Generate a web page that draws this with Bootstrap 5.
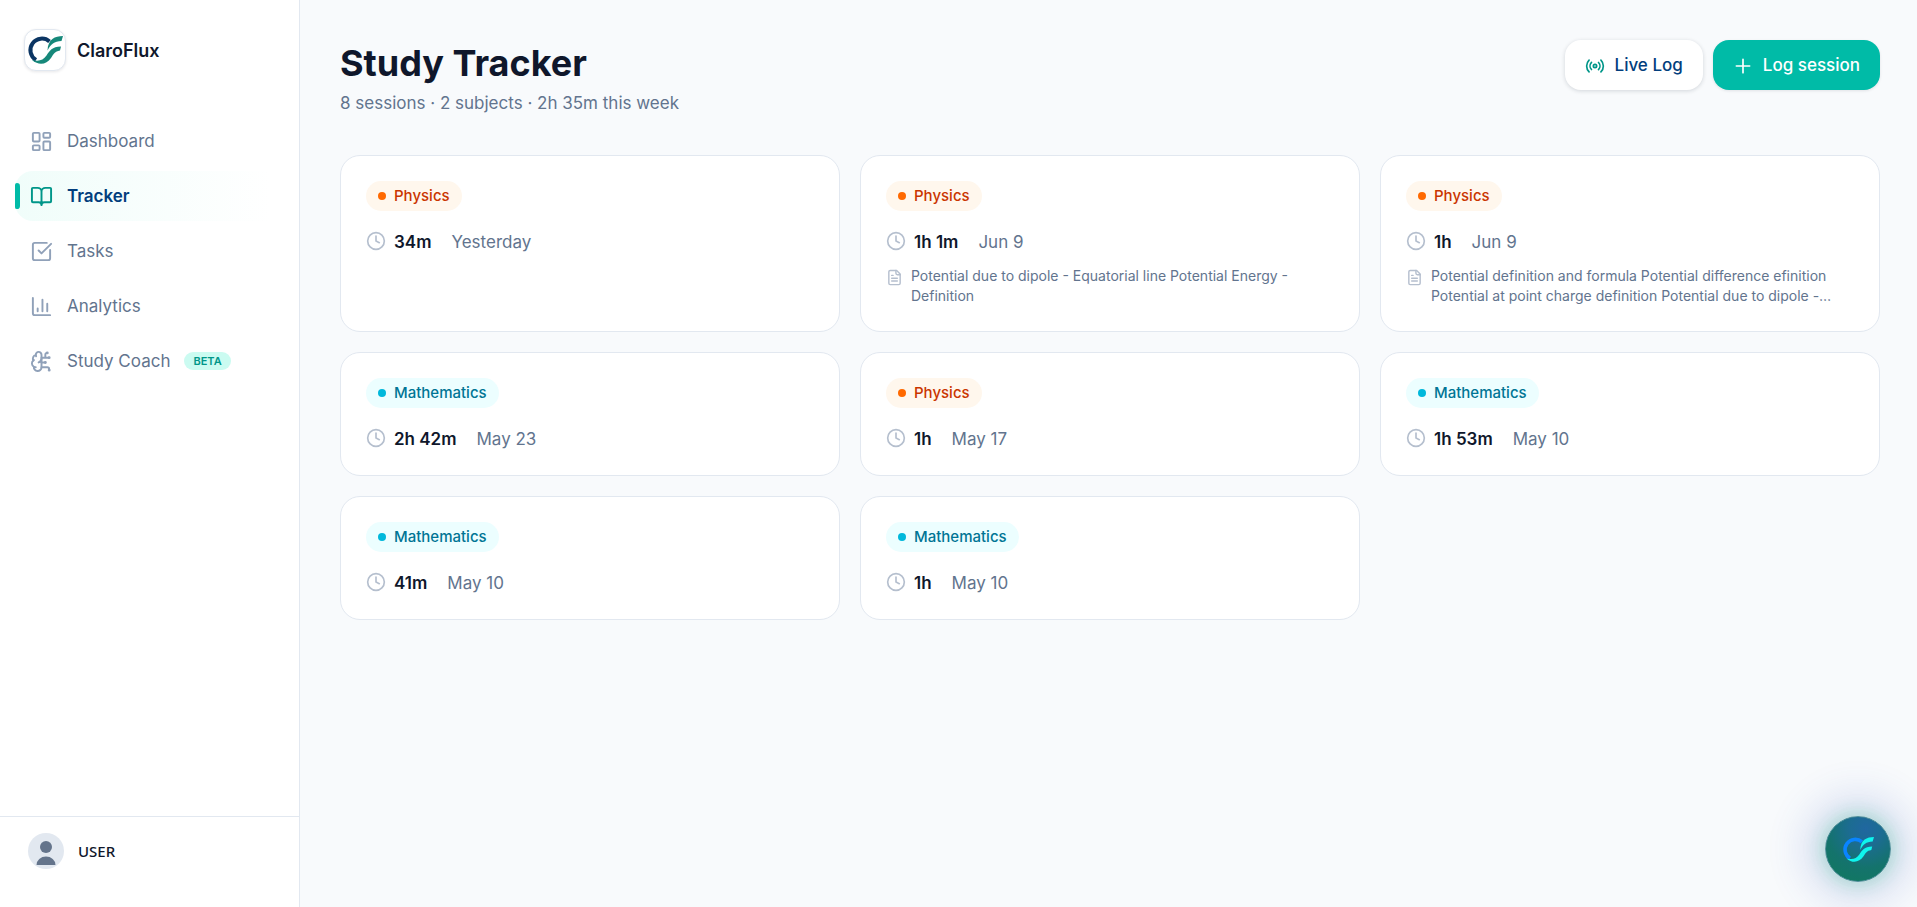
<!DOCTYPE html>
<html lang="en">
<head>
<meta charset="utf-8">
<meta name="viewport" content="width=device-width, initial-scale=1">
<title>ClaroFlux · Study Tracker</title>
<link href="https://cdn.jsdelivr.net/npm/bootstrap@5.3.0/dist/css/bootstrap.min.css" rel="stylesheet">
<style>
  body { font-family: Inter, "Liberation Sans", sans-serif; font-size: 17px; line-height: 25px; color: #0f172b; background: #f8fafc; }
  .icon { fill: none; stroke: currentColor; stroke-width: 2; stroke-linecap: round; stroke-linejoin: round; flex: none; }
  .text-slate { color: #62748e; }

  .side { width: 300px; border-right: 1px solid #e2e8f0; }
  .brand { padding: 29px 24px 0; gap: 11px; font-size: 18px; font-weight: 600; color: #0f172b; }
  .brand-mark { width: 42px; height: 42px; border: 1px solid #e2e8f0; border-radius: 12px; box-shadow: 0 1px 3px rgba(15,23,42,.1); }
  .side-nav { padding: 45px 15px 0; gap: 5px; }
  .side-link { display: flex; align-items: center; gap: 14px; height: 50px; padding: 0 15px; border-radius: 18px; color: #62748e; text-decoration: none; position: relative; }
  .side-link svg { color: #90a1b9; }
  .side-link.active { color: #023e7d; font-weight: 600; background: linear-gradient(90deg, #f0fdfa, #fff 95%); }
  .side-link.active svg { color: #009689; }
  .side-link.active::before { content: ""; position: absolute; left: 0; top: 12px; width: 5px; height: 26px; background: #00bba7; border-radius: 3px 5px 5px 3px; }
  .beta { font-size: 11px; line-height: 18px; font-weight: 600; padding: 0 9px; border-radius: 9px; background: #cbfbf1; color: #009689; }
  .account { height: 91px; border-top: 1px solid #e2e8f0; padding: 16px 28px 0; gap: 14px; }
  .account-name { font-family: "Noto Sans", sans-serif; font-size: 15px; font-weight: 500; line-height: 36px; }

  main { padding: 40px 37px 40px 40px; }
  h1 { font-size: 36px; line-height: 46px; font-weight: 700; margin: 0 0 5px; }
  .head { margin-bottom: 39px; }
  .actions { gap: 10px; }
  .act { height: 50px; border-radius: 16px; font-size: 17px; font-weight: 500; border: 0; padding: 2px 20px 0; display: flex; align-items: center; gap: 10px; }
  .act-live { background: #fff; color: #023e7d; box-shadow: 0 1px 4px rgba(15,23,42,.16); }
  .act-live svg { color: #009689; }
  .act-log, .act-log:hover { background: #00bba7; color: #fff; box-shadow: 0 1px 3px rgba(15,23,42,.1); }

  .sessions { display: grid; grid-template-columns: repeat(3, minmax(0, 1fr)); gap: 20px; }
  .session { background: #fff; border: 1px solid #e2e8f0; border-radius: 20px; padding: 25px; }
  .subject { display: inline-flex; align-items: center; gap: 8px; height: 30px; padding: 0 12px 1px; border-radius: 15px; font-size: 15px; font-weight: 500; vertical-align: top; }
  .subject::before { content: ""; width: 8px; height: 8px; border-radius: 50%; }
  .physics { background: #fff7ed; color: #ca3500; }
  .physics::before { background: #ff6900; }
  .maths { background: #ecfeff; color: #007595; }
  .maths::before { background: #00b8db; }
  .timing { height: 25px; margin-top: 17px; gap: 8px; }
  .timing svg, .note svg { color: #b5bfce; }
  .timing strong, .timing span { padding-top: 3px; }
  .timing strong { font-weight: 600; margin-right: 12px; }
  .note { margin: 13px 0 0; gap: 8px; font-size: 14px; line-height: 20px; }
  .note svg { margin-top: 3px; }

  .coach { position: fixed; right: 26px; bottom: 25px; width: 66px; height: 66px; border: 1px solid #4f8f9a; border-radius: 50%; padding: 0; background: radial-gradient(circle at 62% 18%, #2067a0 0, #1c6c92 25%, #14736c 60%, #107a5c 100%); box-shadow: 0 0 18px 4px rgba(16,170,120,.26), 0 0 34px 26px rgba(60,90,190,.13); }
</style>
</head>
<body>
<svg class="d-none" aria-hidden="true">
  <symbol id="clock" viewBox="0 0 24 24"><circle cx="12" cy="12" r="10"/><path d="M12 6v6l4 2"/></symbol>
  <symbol id="file" viewBox="0 0 24 24"><path d="M15 2H6a2 2 0 0 0-2 2v16a2 2 0 0 0 2 2h12a2 2 0 0 0 2-2V7Z"/><path d="M14 2v4a2 2 0 0 0 2 2h4M10 9H8M16 13H8M16 17H8"/></symbol>
</svg>
<div class="d-flex min-vh-100">
  <aside class="side bg-white d-flex flex-column flex-shrink-0">
    <a href="#" class="brand d-flex align-items-center text-decoration-none">
      <span class="brand-mark d-flex align-items-center justify-content-center bg-white">
        <svg width="36" height="28" viewBox="0 0 36 28" fill="none" aria-hidden="true">
          <path d="M22.500 5.500A11.500 11.500 0 1 0 9 24" stroke="#0b3563" stroke-width="4"/>
          <path d="M36 0C28 0 21 3 20.500 14.500 24 8 27 5.500 34.500 5z" fill="#16887a"/>
          <path d="M34 10.500C25 10.500 22.500 15 19.500 19.500 16 24.500 12 25.500 5 24c7 6 14.500 4.500 19-2 3-4.500 3.500-6.500 9-7.500z" fill="#16887a"/>
        </svg>
      </span>
      ClaroFlux
    </a>
    <nav class="side-nav d-flex flex-column" aria-label="Main">
      <a href="#" class="side-link">
        <svg class="icon" width="23" height="23" viewBox="0 0 24 24"><rect x="3" y="3" width="7" height="9" rx="1"/><rect x="14" y="3" width="7" height="5" rx="1"/><rect x="14" y="12" width="7" height="9" rx="1"/><rect x="3" y="16" width="7" height="5" rx="1"/></svg>
        Dashboard</a>
      <a href="#" class="side-link active" aria-current="page">
        <svg class="icon" width="23" height="23" viewBox="0 0 24 24"><path d="M12 7v14M3 18a1 1 0 0 1-1-1V4a1 1 0 0 1 1-1h5a4 4 0 0 1 4 4 4 4 0 0 1 4-4h5a1 1 0 0 1 1 1v13a1 1 0 0 1-1 1h-6a3 3 0 0 0-3 3 3 3 0 0 0-3-3z"/></svg>
        Tracker</a>
      <a href="#" class="side-link">
        <svg class="icon" width="23" height="23" viewBox="0 0 24 24"><path d="M21 10.500V19a2 2 0 0 1-2 2H5a2 2 0 0 1-2-2V5a2 2 0 0 1 2-2h12.500M9 11l3 3L22 4"/></svg>
        Tasks</a>
      <a href="#" class="side-link">
        <svg class="icon" width="23" height="23" viewBox="0 0 24 24"><path d="M3 3v16a2 2 0 0 0 2 2h16M18 17V9M13 17V5M8 17v-3"/></svg>
        Analytics</a>
      <a href="#" class="side-link">
        <svg class="icon" width="23" height="23" viewBox="0 0 24 24"><path d="M12 5a3 3 0 1 0-5.997.125 4 4 0 0 0-2.526 5.770 4 4 0 0 0 .556 6.588A4 4 0 1 0 12 18Z"/><path d="M9 13a4.500 4.500 0 0 0 3-4M6.003 5.125A3 3 0 0 0 6.401 6.500M3.477 10.896a4 4 0 0 1 .585-.396M6 18a4 4 0 0 1-1.967-.516M12 13h4M12 18h6a2 2 0 0 1 2 2v1M12 8h8M16 8V5a2 2 0 0 1 2-2"/><circle cx="16" cy="13" r=".5"/><circle cx="18" cy="3" r=".5"/><circle cx="20" cy="21" r=".5"/><circle cx="20" cy="8" r=".5"/></svg>
        Study Coach <span class="beta">BETA</span></a>
    </nav>
    <div class="account d-flex mt-auto">
      <svg width="36" height="36" viewBox="0 0 36 36" aria-hidden="true"><circle cx="18" cy="18" r="18" fill="#e2e8f0"/><circle cx="18" cy="14" r="6" fill="#64748b"/><path d="M8.500 32a9.500 8.500 0 0 1 19 0z" fill="#64748b"/></svg>
      <span class="account-name">USER</span>
    </div>
  </aside>

  <main class="flex-grow-1">
    <header class="head d-flex justify-content-between align-items-start">
      <div>
        <h1>Study Tracker</h1>
        <p class="text-slate mb-0">8 sessions · 2 subjects · 2h 35m this week</p>
      </div>
      <div class="actions d-flex">
        <button type="button" class="btn act act-live"><svg class="icon" width="20" height="20" viewBox="0 0 24 24"><path d="M4.900 19.100C1 15.200 1 8.800 4.900 4.900M7.800 16.200c-2.300-2.300-2.300-6.100 0-8.500M16.200 7.800c2.300 2.300 2.300 6.100 0 8.500M19.100 4.900C23 8.800 23 15.100 19.100 19"/><circle cx="12" cy="12" r="2"/></svg>Live Log</button>
        <button type="button" class="btn act act-log"><svg class="icon" width="20" height="20" viewBox="0 0 24 24"><path d="M4 12h16M12 4v16"/></svg>Log session</button>
      </div>
    </header>

    <section class="sessions" aria-label="Sessions">
      <article class="session"><span class="subject physics">Physics</span>
        <div class="timing d-flex align-items-center"><svg class="icon" width="20" height="20"><use href="#clock"/></svg><strong>34m</strong><span class="text-slate">Yesterday</span></div></article>
      <article class="session"><span class="subject physics">Physics</span>
        <div class="timing d-flex align-items-center"><svg class="icon" width="20" height="20"><use href="#clock"/></svg><strong>1h 1m</strong><span class="text-slate">Jun 9</span></div>
        <p class="note text-slate d-flex"><svg class="icon" width="17" height="17"><use href="#file"/></svg><span>Potential due to dipole - Equatorial line Potential Energy - Definition</span></p></article>
      <article class="session"><span class="subject physics">Physics</span>
        <div class="timing d-flex align-items-center"><svg class="icon" width="20" height="20"><use href="#clock"/></svg><strong>1h</strong><span class="text-slate">Jun 9</span></div>
        <p class="note text-slate d-flex"><svg class="icon" width="17" height="17"><use href="#file"/></svg><span>Potential definition and formula Potential difference efinition Potential at point charge definition Potential due to dipole -…</span></p></article>
      <article class="session"><span class="subject maths">Mathematics</span>
        <div class="timing d-flex align-items-center"><svg class="icon" width="20" height="20"><use href="#clock"/></svg><strong>2h 42m</strong><span class="text-slate">May 23</span></div></article>
      <article class="session"><span class="subject physics">Physics</span>
        <div class="timing d-flex align-items-center"><svg class="icon" width="20" height="20"><use href="#clock"/></svg><strong>1h</strong><span class="text-slate">May 17</span></div></article>
      <article class="session"><span class="subject maths">Mathematics</span>
        <div class="timing d-flex align-items-center"><svg class="icon" width="20" height="20"><use href="#clock"/></svg><strong>1h 53m</strong><span class="text-slate">May 10</span></div></article>
      <article class="session"><span class="subject maths">Mathematics</span>
        <div class="timing d-flex align-items-center"><svg class="icon" width="20" height="20"><use href="#clock"/></svg><strong>41m</strong><span class="text-slate">May 10</span></div></article>
      <article class="session"><span class="subject maths">Mathematics</span>
        <div class="timing d-flex align-items-center"><svg class="icon" width="20" height="20"><use href="#clock"/></svg><strong>1h</strong><span class="text-slate">May 10</span></div></article>
    </section>
  </main>
</div>
<button type="button" class="coach d-flex align-items-center justify-content-center" aria-label="Open study coach">
  <svg width="32" height="25" viewBox="0 0 36 28" fill="none" aria-hidden="true">
    <path d="M22.500 5.500A11.500 11.500 0 1 0 9 24" stroke="#0a84ff" stroke-width="4"/>
    <path d="M36 0C28 0 21 3 20.500 14.500 24 8 27 5.500 34.500 5z" fill="#0ff5ee"/>
    <path d="M34 10.500C25 10.500 22.500 15 19.500 19.500 16 24.500 12 25.500 5 24c7 6 14.500 4.500 19-2 3-4.500 3.500-6.500 9-7.500z" fill="#0ff5ee"/>
  </svg>
</button>
<script src="https://cdn.jsdelivr.net/npm/bootstrap@5.3.0/dist/js/bootstrap.bundle.min.js"></script>
</body>
</html>
